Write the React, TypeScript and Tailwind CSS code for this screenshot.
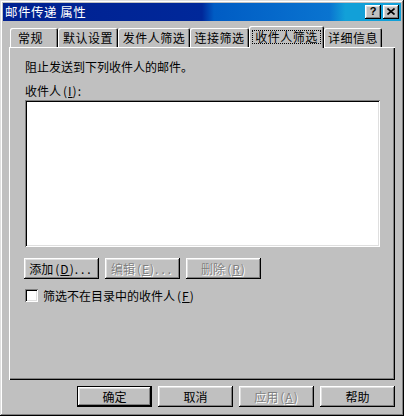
import React from "react";

// =======================
// SHARED STYLES
// =======================
const raised =
  "bg-[#c0c0c0] shadow-[inset_-1px_-1px_#000,inset_1px_1px_#fff,inset_-2px_-2px_#808080,inset_2px_2px_#dfdfdf]";
const sunken =
  "bg-white shadow-[inset_1px_1px_#808080,inset_-1px_-1px_#fff,inset_2px_2px_#000,inset_-2px_-2px_#dfdfdf]";
const disabledText = "text-[#808080] [text-shadow:1px_1px_0_#fff]";

// mnemonic suffix like "(D)..." – half-width latin, a little wider like the bitmap font
function Key({ k, dots }: { k: string; dots?: boolean }) {
  return (
    <span className="ml-[2px] tracking-[1px]">
      (<span className="underline underline-offset-1">{k}</span>){dots ? <span className="tracking-[3px]">...</span> : null}
    </span>
  );
}

// =======================
// BUTTON
// =======================
function Button({
  children,
  disabled,
  isDefault,
  className = "",
}: {
  children: React.ReactNode;
  disabled?: boolean;
  isDefault?: boolean;
  className?: string;
}) {
  if (isDefault) {
    return (
      <div className={`w-[75px] h-[21px] border border-black ${className}`}>
        <div className={`w-full h-full flex items-center justify-center leading-[12px] ${raised}`}>{children}</div>
      </div>
    );
  }
  return (
    <div
      className={`w-[75px] h-[21px] flex items-center justify-center leading-[12px] ${raised} ${
        disabled ? disabledText : ""
      } ${className}`}
    >
      {children}
    </div>
  );
}

// =======================
// TAB
// =======================
function Tab({ label, width, first }: { label: string; width: number; first?: boolean }) {
  return (
    <div
      style={{ width }}
      className={`h-[19px] flex items-center ${first ? "pl-[8px]" : "justify-center"} leading-[12px] tracking-[0.5px] rounded-t-[2px] shadow-[inset_1px_1px_#fff,inset_-1px_0_#000,inset_-2px_0_#808080] bg-[#c0c0c0]`}
    >
      {label}
    </div>
  );
}

function ActiveTab({ label, width }: { label: string; width: number }) {
  return (
    <div
      style={{ width }}
      className="h-[22px] -mb-[1px] flex items-start justify-center pt-[4px] rounded-t-[2px] shadow-[inset_1px_1px_#fff,inset_-1px_0_#000,inset_-2px_0_#808080] bg-[#c0c0c0]"
    >
      <div className="h-[14px] px-[2px] flex items-center leading-[12px] tracking-[0.5px] border border-dotted border-black">{label}</div>
    </div>
  );
}

// =======================
// MAIN COMPONENT
// =======================
export default function App() {
  return (
    <div className="w-[404px] h-[416px] p-[3px] flex flex-col bg-[#c0c0c0] text-black text-[12px] font-['Noto_Sans_CJK_SC',sans-serif] shadow-[inset_-1px_-1px_#000,inset_1px_1px_#dfdfdf,inset_-2px_-2px_#808080,inset_2px_2px_#fff] overflow-hidden">
      {/* title bar */}
      <div className="h-[18px] flex items-center pl-[2px] pr-[2px] bg-[linear-gradient(90deg,#002090_0%,#00289a_50%,#005cc4_53%,#0a74d0_82%,#12a0d8_86%,#12a0d8_100%)]">
        <span className="text-white text-[12.5px] leading-[12px] tracking-[0.5px]">邮件传递&nbsp;属性</span>
        <div className="ml-auto flex items-center gap-[2px]">
          <div className={`w-[16px] h-[14px] flex items-center justify-center ${raised}`}>
            <span className="font-['Liberation_Sans',sans-serif] font-bold text-[11px] leading-[11px] -mt-px">?</span>
          </div>
          <div className={`w-[16px] h-[14px] flex items-center justify-center ${raised}`}>
            <svg width="8" height="7" viewBox="0 0 8 7" className="-mt-px">
              <path d="M0.5 0.5 L7.5 6.5 M7.5 0.5 L0.5 6.5" stroke="#000" strokeWidth="1.6" />
            </svg>
          </div>
        </div>
      </div>

      {/* tabs + panel */}
      <div className="mt-[5px] px-[6px]">
        <div className="relative z-10 h-[21px] flex items-end pl-[1px]">
          <Tab label="常规" width={48} first />
          <Tab label="默认设置" width={60} />
          <Tab label="发件人筛选" width={72} />
          <Tab label="连接筛选" width={59} />
          <ActiveTab label="收件人筛选" width={75} />
          <Tab label="详细信息" width={58} />
        </div>

        <div className="relative z-0 h-[333px] pl-[16px] flex flex-col shadow-[inset_1px_1px_#fff,inset_-1px_-1px_#000,inset_-2px_-2px_#808080]">
          <div className="mt-[13px] h-[14px] leading-[14px]">阻止发送到下列收件人的邮件。</div>
          <div className="mt-[10px] h-[14px] leading-[14px]">
            收件人<Key k="I" />:
          </div>
          <div className={`mt-[2px] w-[355px] h-[147px] ${sunken}`} />

          <div className="mt-[11px] -ml-[1px] flex gap-[6px]">
            <Button>
              添加<Key k="D" dots />
            </Button>
            <Button disabled>
              编辑<Key k="E" dots />
            </Button>
            <Button disabled>
              删除<Key k="R" />
            </Button>
          </div>

          <div className="mt-[10px] flex items-center gap-[5px]">
            <div className={`w-[13px] h-[13px] ${sunken}`} />
            <span className="leading-[13px]">
              筛选不在目录中的收件人<Key k="F" />
            </span>
          </div>
        </div>
      </div>

      {/* dialog buttons */}
      <div className="mt-[6px] pr-[6px] flex justify-end gap-[6px]">
        <Button isDefault>确定</Button>
        <Button>取消</Button>
        <Button disabled>
          应用<Key k="A" />
        </Button>
        <Button>帮助</Button>
      </div>
    </div>
  );
}
